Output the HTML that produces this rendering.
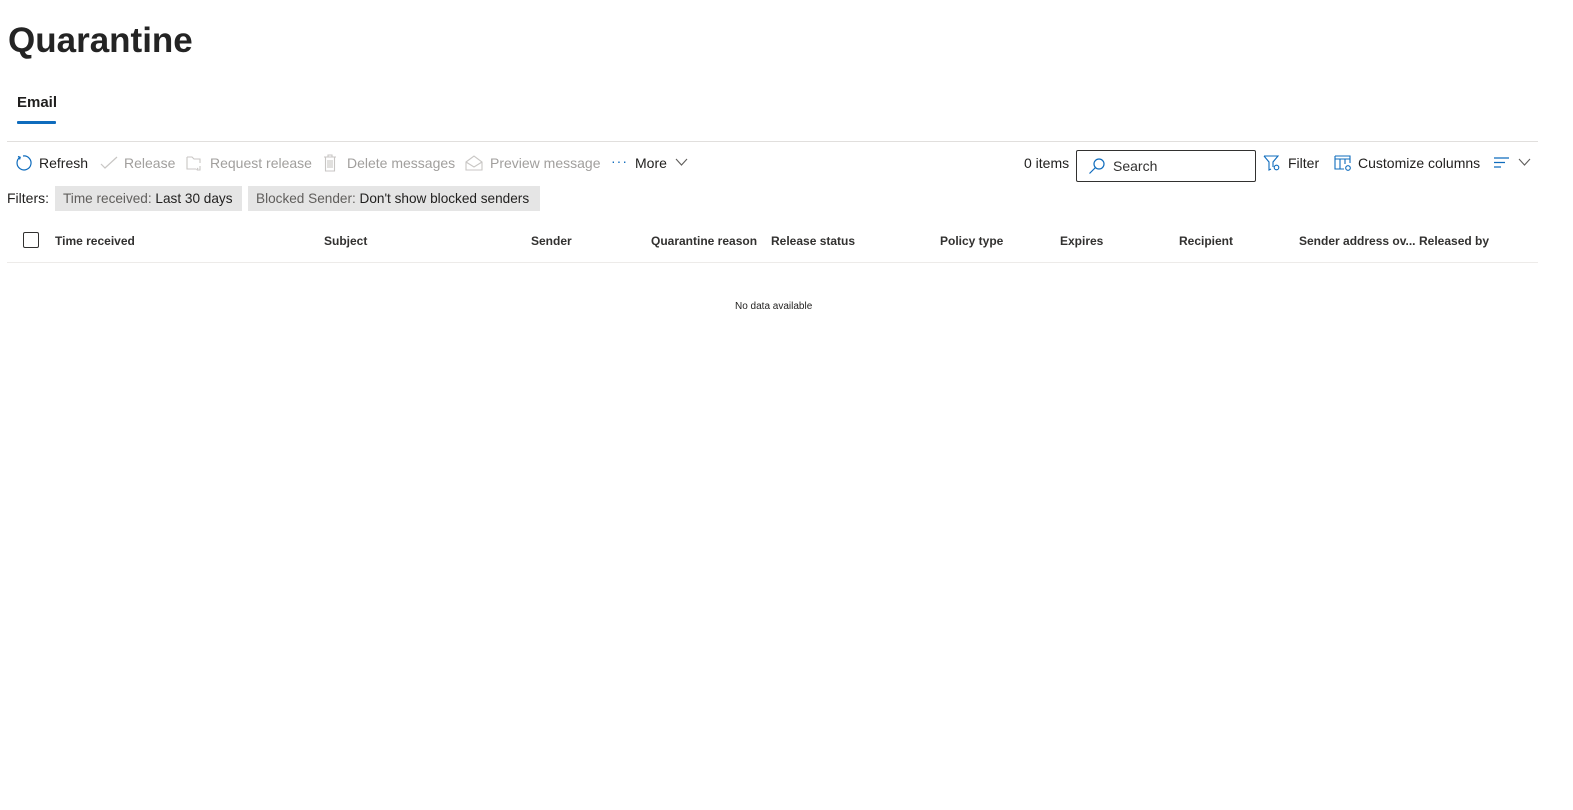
<!DOCTYPE html>
<html><head><meta charset="utf-8"><style>
body{margin:0;width:1573px;height:810px;background:#fff;font-family:"Liberation Sans",sans-serif;color:#201f1e;position:relative;overflow:hidden}
.a{position:absolute;white-space:nowrap}
.tb{font-size:14px;line-height:20px;top:153px}
.dis{color:#a19f9d}
.chip{position:absolute;top:186px;height:25px;background:#e5e5e5;font-size:13.6px;line-height:25px;padding:0 9px 0 8px;color:#201f1e}
.chip span{color:#605e5c}
.h{font-size:12px;font-weight:bold;top:233px;line-height:16px;color:#323130}
svg{position:absolute}
</style></head><body>
<div class="a" style="left:8px;top:19px;font-size:35px;font-weight:bold;line-height:44px;color:#242424">Quarantine</div>
<div class="a" style="left:17px;top:93px;font-size:15px;line-height:20px;font-weight:bold;color:#201f1e">Email</div>
<div class="a" style="left:17px;top:121px;width:39px;height:3px;background:#0f6cbd;border-radius:1px"></div>
<div class="a" style="left:7px;top:141px;width:1531px;height:1px;background:#e1dfdd"></div>

<svg style="left:14px;top:154px" width="18" height="18" viewBox="0 0 18 18" fill="none" stroke="#0f6cbd" stroke-width="1.2"><path d="M6 3.2A7 7 0 1 0 9 2"/><path d="M4 2.5l2.2.8-.6 2.2"/></svg>
<div class="a tb" style="left:39px">Refresh</div>
<svg style="left:100px;top:156px" width="18" height="14" viewBox="0 0 18 14" fill="none" stroke="#c8c6c4" stroke-width="1.2"><path d="M1 8l4 4L17 1"/></svg>
<div class="a tb dis" style="left:124px">Release</div>
<svg style="left:186px;top:155px" width="18" height="17" viewBox="0 0 18 17" fill="none" stroke="#c8c6c4" stroke-width="1.1"><path d="M1 2h5l2 2h6v4M1 2v12h9"/><path d="M14 11v4h-3M12 13l-1.5 2"/></svg>
<div class="a tb dis" style="left:210px">Request release</div>
<svg style="left:323px;top:154px" width="14" height="18" viewBox="0 0 14 18" fill="none" stroke="#c8c6c4" stroke-width="1.1"><path d="M1 3h12M5 3V1h4v2M2.5 3v14h9V3M5 6v8M7 6v8M9 6v8"/></svg>
<div class="a tb dis" style="left:347px">Delete messages</div>
<svg style="left:465px;top:155px" width="18" height="16" viewBox="0 0 18 16" fill="none" stroke="#c8c6c4" stroke-width="1.1"><path d="M1 7L9 1l8 6v8H1z M1 7l8 5 8-5"/></svg>
<div class="a tb dis" style="left:490px">Preview message</div>
<div class="a tb" style="left:611px;color:#0f6cbd;letter-spacing:1px;top:151px">···</div>
<div class="a tb" style="left:635px">More</div>
<svg style="left:675px;top:158px" width="13" height="9" viewBox="0 0 13 9" fill="none" stroke="#605e5c" stroke-width="1.1"><path d="M1 1l5.5 6L12 1"/></svg>

<div class="a tb" style="left:1024px">0 items</div>
<div class="a" style="left:1076px;top:150px;width:178px;height:30px;border:1px solid #323130;border-radius:2px"></div>
<svg style="left:1088px;top:157px" width="18" height="18" viewBox="0 0 18 18" fill="none" stroke="#0f6cbd" stroke-width="1.2"><circle cx="11" cy="7" r="5"/><path d="M7.5 10.5L1.5 16.5"/></svg>
<div class="a tb" style="left:1113px;top:156px;color:#323130">Search</div>
<svg style="left:1263px;top:155px" width="19" height="17" viewBox="0 0 19 17" fill="none" stroke="#0f6cbd" stroke-width="1.1"><path d="M1 1h14l-5 6v5"/><path d="M1 1l5 6v8l2-1"/><circle cx="13.5" cy="12.5" r="2.3"/></svg>
<div class="a tb" style="left:1288px">Filter</div>
<svg style="left:1334px;top:155px" width="19" height="17" viewBox="0 0 19 17" fill="none" stroke="#0f6cbd" stroke-width="1.1"><path d="M1 1h15v7M1 1v13h9M1 4h15M6 4v10M11 4v5"/><circle cx="14" cy="13" r="2.3"/></svg>
<div class="a tb" style="left:1358px">Customize columns</div>
<svg style="left:1494px;top:157px" width="16" height="12" viewBox="0 0 16 12" fill="none" stroke="#0f6cbd" stroke-width="1.2"><path d="M0 1h15M0 5.5h11M0 10h7"/></svg>
<svg style="left:1518px;top:158px" width="13" height="9" viewBox="0 0 13 9" fill="none" stroke="#605e5c" stroke-width="1.1"><path d="M1 1l5.5 6L12 1"/></svg>

<div class="a" style="left:7px;top:188px;font-size:14px;line-height:20px">Filters:</div>
<div class="chip" style="left:55px"><span>Time received:</span> Last 30 days</div>
<div class="chip" style="left:248px;padding-right:11px"><span>Blocked Sender:</span> Don't show blocked senders</div>

<div class="a" style="left:23px;top:232px;width:14px;height:14px;border:1px solid #323130;border-radius:2px"></div>
<div class="a h" style="left:55px">Time received</div>
<div class="a h" style="left:324px">Subject</div>
<div class="a h" style="left:531px">Sender</div>
<div class="a h" style="left:651px">Quarantine reason</div>
<div class="a h" style="left:771px">Release status</div>
<div class="a h" style="left:940px">Policy type</div>
<div class="a h" style="left:1060px">Expires</div>
<div class="a h" style="left:1179px">Recipient</div>
<div class="a h" style="left:1299px">Sender address ov...</div>
<div class="a h" style="left:1419px">Released by</div>
<div class="a" style="left:7px;top:262px;width:1531px;height:1px;background:#edebe9"></div>
<div class="a" style="left:735px;top:300px;font-size:10px;line-height:13px">No data available</div>
</body></html>
